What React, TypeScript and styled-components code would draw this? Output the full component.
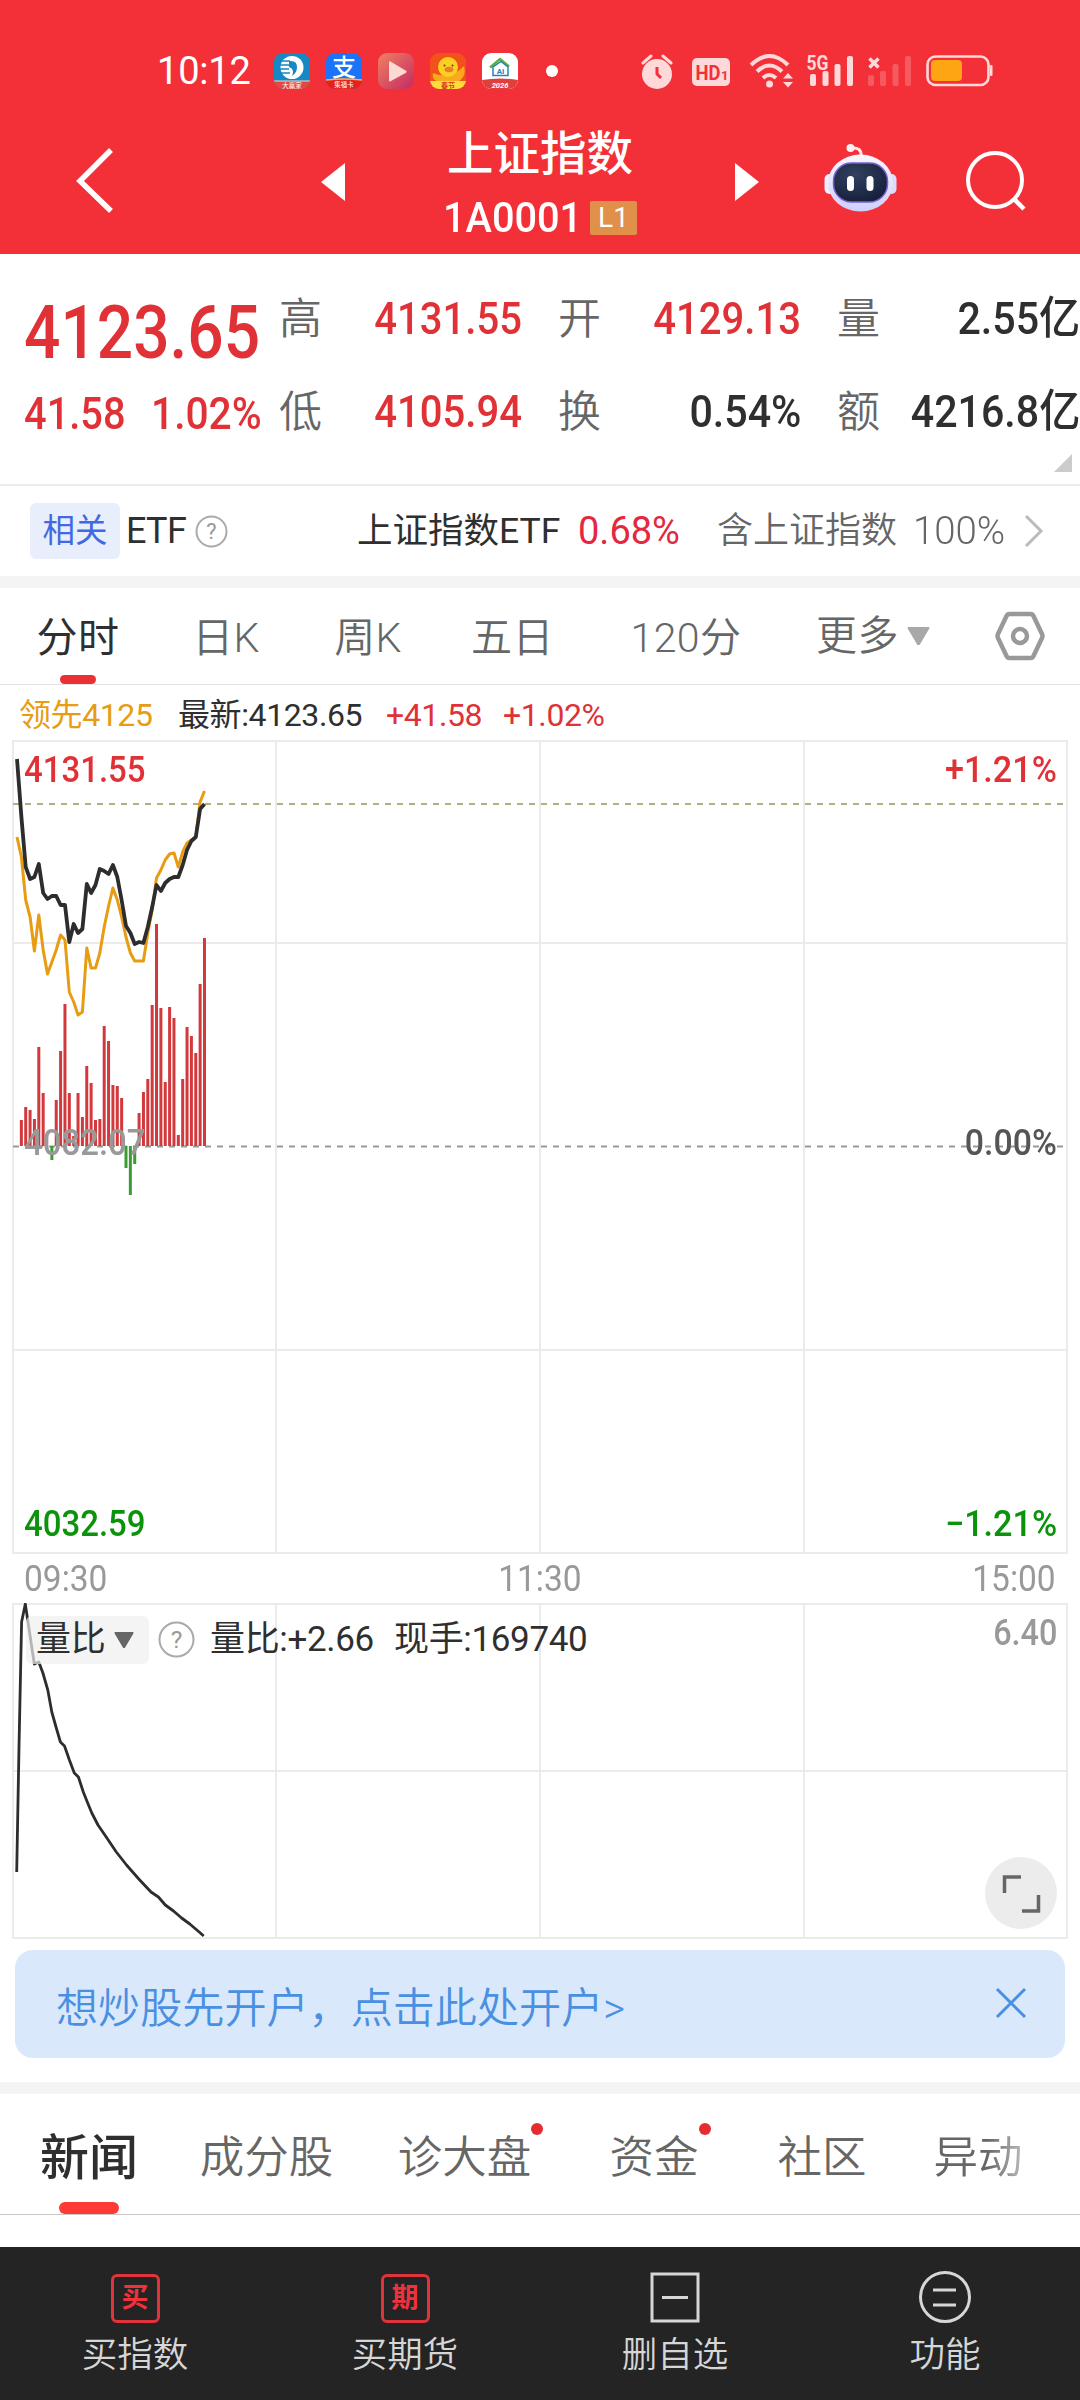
import React from 'react'
import styled, { createGlobalStyle } from 'styled-components';

const RED = '#e03136';
const INK = '#2f2f2f';
const GREY = '#666';

const GlobalStyle = createGlobalStyle`
    * { box-sizing: border-box; }
    body {
        margin: 0;
        background: #fff;
        font-family: Roboto, "Noto Sans CJK SC", sans-serif;
        color: ${INK};
    }
`;

const Screen = styled.div`
    width: 1080px;
    height: 2400px;
    overflow: hidden;
    display: flex;
    flex-direction: column;
    background: #fff;
`;

/* numbers use a narrow cut, squeezed toward the side they are aligned on */
const Num = styled.span<{ $size: number; $color?: string; $weight?: number; $x?: number; $from?: string }>`
    display: inline-block;
    font-size: ${(p) => p.$size}px;
    line-height: 1;
    font-weight: ${(p) => p.$weight || 500};
    color: ${(p) => p.$color || 'inherit'};
    white-space: nowrap;
    transform: scaleX(${(p) => p.$x || 0.9});
    transform-origin: ${(p) => p.$from || 'left'} center;
`;

/* ---------- header ---------- */

const Header = styled.header`
    height: 254px;
    flex: none;
    background: #f33038;
    color: #fff;
`;

const StatusBar = styled.div`
    height: 127px;
    padding: 15px 87px 0 157px;
    display: flex;
    align-items: center;
`;

const Clock = styled.span`
    width: 117px;
    font-size: 38px;
    font-weight: 400;
    letter-spacing: -0.2px;
`;

const AppIcons = styled.div`
    display: flex;
    align-items: center;
    gap: 16px;

    svg { display: block; }
`;

const SystemIcons = styled.div`
    margin-left: auto;
    display: flex;
    align-items: center;

    svg { display: block; }
`;

const NavBar = styled.div`
    height: 127px;
    display: grid;
    grid-template-columns: 310px 110px 240px 120px 120px 180px;
    align-items: center;
    justify-items: center;

    svg { display: block; }
`;

const BackSlot = styled.div`
    width: 100%;
    padding: 0 0 22px 74px;
`;

const ArrowSlot = styled.div<{ $side: 'left' | 'right' }>`
    width: 100%;
    display: flex;
    padding: ${(p) => (p.$side === 'left' ? '0 0 17px 11px' : '0 0 17px 75px')};
`;

const RobotSlot = styled.div`
    padding: 0 0 25px 41px;
`;

const SearchSlot = styled.div`
    padding: 0 0 19px 12px;
`;

const TitleBlock = styled.div`
    height: 127px;
    display: flex;
    flex-direction: column;
    align-items: center;

    h1 {
        margin: 0;
        height: 54px;
        font-size: 46.5px;
        line-height: 54px;
        font-weight: 500;
    }
`;

const CodeLine = styled.div`
    width: 194px;
    margin-top: 14px;
    height: 46px;
    display: flex;
    align-items: center;
    justify-content: space-between;
`;

const CodeText = styled.div`
    width: 132px;
`;

const LevelBadge = styled.span`
    width: 47px;
    height: 34px;
    border-radius: 2px;
    background: #e1904a;
    font-size: 28px;
    line-height: 34px;
    text-align: center;
`;

/* ---------- quote ---------- */

const Quote = styled.section`
    height: 232px;
    flex: none;
    padding: 18px 0 0 24px;
    border-bottom: 2px solid #ebebeb;
    display: grid;
    grid-template-columns: 255px 801px;
    grid-template-rows: 93px 93px 28px;
    align-items: center;
`;

const PriceCell = styled.div`
    padding-top: 29px;
`;

const ChangeCell = styled.div`
    display: grid;
    grid-template-columns: 127px 1fr;
    padding-top: 5px;
`;

const QuoteGrid = styled.div`
    grid-row: 1 / span 2;
    grid-column: 2;
    display: grid;
    grid-template-columns: 279px 279px 240px;
    grid-template-rows: 93px 93px;
    align-items: center;
`;

const QuoteItem = styled.div`
    width: 243px;
    display: flex;
    align-items: center;
    justify-content: space-between;
`;

const Label = styled.div`
    font-size: 43px;
    line-height: 60px;
    font-weight: 350;
    color: ${GREY};
`;

const CornerMark = styled.div`
    grid-row: 3;
    grid-column: 2;
    justify-self: end;
    align-self: end;
    margin: 0 8px 14px 0;
    width: 18px;
    height: 18px;
    background: #ccc;
    clip-path: polygon(100% 0, 100% 100%, 0 100%);
`;

const EtfRow = styled.section`
    height: 90px;
    flex: none;
    display: flex;
    align-items: center;
    font-size: 36px;
    line-height: 56px;
`;

const EtfChip = styled.span`
    width: 90px;
    height: 56px;
    margin-left: 30px;
    border-radius: 6px;
    background: #e8eefc;
    color: #4169e1;
    font-size: 32.5px;
    line-height: 56px;
    text-align: center;
`;

const EtfTag = styled.span`
    width: 75px;
    padding-left: 6px;
    font-size: 36px;
    letter-spacing: -0.7px;
`;

const EtfName = styled.span`
    width: 221px;
    margin-left: 129px;
    font-size: 35.5px;
    white-space: nowrap;
`;

const EtfShare = styled.span`
    width: 196px;
    font-size: 36px;
    font-weight: 350;
    color: ${GREY};
`;

const EtfPct = styled.span<{ $w: number }>`
    width: ${(p) => p.$w}px;
    display: flex;
`;

const Band = styled.div`
    height: 12px;
    flex: none;
    background: #f4f4f4;
`;

/* ---------- period tabs ---------- */

const PeriodTabs = styled.nav`
    height: 97px;
    flex: none;
    border-bottom: 1px solid #e2e2e2;
    display: grid;
    grid-template-columns: 156px 140px 144px 145px 202px 145px 1fr;
`;

const PeriodTab = styled.div<{ $active?: boolean }>`
    height: 96px;
    display: flex;
    flex-direction: column;
    align-items: center;
    padding-top: 20px;
    font-size: 41px;
    line-height: 60px;
    letter-spacing: 0.4px;
    font-weight: ${(p) => (p.$active ? 400 : 350)};
    color: ${(p) => (p.$active ? INK : GREY)};
    white-space: nowrap;

    &::after {
        content: '';
        display: ${(p) => (p.$active ? 'block' : 'none')};
        width: 36px;
        height: 9px;
        margin-top: 7px;
        border-radius: 5px;
        background: #ea3035;
    }
`;

const MoreTab = styled(PeriodTab)`
    flex-direction: row;
    align-items: center;
    justify-content: flex-start;
    padding: 0 0 0 29px;
    gap: 8px;
`;

const HexSlot = styled.div`
    display: flex;
    align-items: center;
    padding: 0 0 1px 63px;
`;

/* ---------- charts ---------- */

const Legend = styled.div`
    height: 55px;
    flex: none;
    padding: 5px 0 0 19px;
    display: grid;
    grid-template-columns: 159px 208px 117px 1fr;
    align-items: center;
    font-size: 32px;
    line-height: 48px;
`;

const LegendItem = styled.span<{ $color?: string }>`
    color: ${(p) => p.$color || INK};
    letter-spacing: -0.4px;
    white-space: nowrap;
`;

const ChartPanel = styled.div<{ $h: number }>`
    position: relative;
    height: ${(p) => p.$h}px;
    flex: none;
    margin: 0 11px 0 12px;

    > svg { display: block; }
`;

const ChartLabel = styled.div<{ $top: number; $side: 'left' | 'right' }>`
    position: absolute;
    top: ${(p) => p.$top}px;
    ${(p) => p.$side}: 12px;
    display: flex;
`;

const TimeAxis = styled.div`
    height: 49px;
    flex: none;
    padding: 0 24px;
    display: flex;
    align-items: center;
    justify-content: space-between;
`;

const IndicatorBar = styled.div`
    position: absolute;
    top: 12px;
    left: 14px;
    display: flex;
    align-items: center;
    font-size: 35px;
    line-height: 48px;
    letter-spacing: -0.35px;
    white-space: nowrap;
`;

const IndicatorPick = styled.span`
    width: 123px;
    height: 48px;
    padding: 1px 0 0 10px;
    margin-right: 9px;
    border-radius: 6px;
    background: rgba(240, 240, 240, 0.7);
    display: flex;
    align-items: center;
    gap: 9px;
`;

const IndicatorValue = styled.span<{ $w: number }>`
    width: ${(p) => p.$w}px;
    padding-top: 1px;
`;

const IndicatorHelp = styled.span`
    display: flex;
    margin-right: 15px;
`;

const ExpandButton = styled.button`
    position: absolute;
    right: 12px;
    bottom: 10px;
    width: 72px;
    height: 72px;
    padding: 0;
    border: none;
    border-radius: 50%;
    background: #ececec;

    svg { display: block; }
`;

/* ---------- banner, news tabs, bottom bar ---------- */

const Banner = styled.div`
    height: 108px;
    flex: none;
    margin: 11px 15px 24px;
    padding: 0 38px 0 41px;
    border-radius: 18px;
    background: #dae8fb;
    color: #4a90e2;
    display: flex;
    align-items: center;
    justify-content: space-between;
    font-size: 42.1px;
    font-weight: 350;

    svg { margin-bottom: 2px; }
`;

const NewsTabs = styled.nav`
    height: 121px;
    flex: none;
    border-bottom: 1px solid #c9c9c9;
    display: flex;
`;

const NewsTab = styled.div<{ $w: number; $active?: boolean; $fade?: boolean }>`
    width: ${(p) => p.$w}px;
    height: 120px;
    padding-top: ${(p) => (p.$active ? 35 : 34)}px;
    display: flex;
    flex-direction: column;
    align-items: center;
    line-height: 60px;
    font-size: ${(p) => (p.$active ? 49 : 44.5)}px;
    font-weight: ${(p) => (p.$active ? 500 : 350)};
    color: ${(p) => (p.$active ? INK : GREY)};

    span {
        position: relative;
        ${(p) => p.$fade && 'mask-image: linear-gradient(90deg, #000 60%, rgba(0, 0, 0, 0.45));'}
    }
`;

const Underline = styled.i`
    width: 60px;
    height: 12px;
    margin-top: 13px;
    border-radius: 6px;
    background: #fe3a34;
`;

const RedDot = styled.i`
    position: absolute;
    top: -5px;
    right: -12px;
    width: 12px;
    height: 12px;
    border-radius: 50%;
    background: #e52d31;
`;

const BottomBar = styled.footer`
    height: 153px;
    flex: none;
    margin-top: 32px;
    background: #242424;
    color: #d6d6d6;
    display: grid;
    grid-template-columns: repeat(4, 270px);
`;

const BottomItem = styled.div`
    padding-top: 24px;
    display: flex;
    flex-direction: column;
    align-items: center;
    font-size: 35.5px;
    line-height: 60px;
    font-weight: 350;
`;

const IconBox = styled.div`
    height: 54px;
    display: flex;
    align-items: center;
`;

const SealIcon = styled.span`
    width: 49px;
    height: 49px;
    border: 3px solid #e0333c;
    border-radius: 6px;
    color: #f2303a;
    font-size: 27px;
    line-height: 42px;
    font-weight: 700;
    text-align: center;
`;

/* ---------- data ---------- */

const STEP = 4.36;

const price = [
    19, 77, 127, 139, 137, 124, 153, 159, 156, 156, 165, 165, 202, 184, 193, 189, 144, 153, 145, 129, 131, 134,
    125, 137, 160, 186, 193, 204, 202, 203, 187, 167, 145, 151, 143, 139, 137, 137, 125, 110, 101, 97, 69, 64,
];

const lead = [
    97, 117, 160, 177, 211, 175, 210, 234, 222, 210, 195, 200, 252, 262, 275, 272, 208, 228, 228, 213, 187, 166,
    148, 160, 177, 197, 213, 221, 221, 221, 193, 170, 138, 130, 120, 114, 113, 127, 112, 103, 100, 97, 62, 51,
];

const volume = [
    0, 26, 39, 36, 27, 99, 53, 0, -14, 46, 95, 142, 53, 10, 53, 29, 80, 63, 26, 27, 120, 105,
    61, 60, 48, -22, -49, -18, 33, 54, 67, 141, 222, 138, 64, 139, 128, 11, 67, 119, 110, 93, 162, 208,
];

const ratio =
    '3.7,269 6,144 8.6,19 12.3,1 21.3,61 25.8,59 29.9,70 34.8,87 38.8,109 43.3,125 47.4,139 51.5,143 56.4,157 ' +
    '61.3,170 65.4,174 70.3,189 74.3,199 78.8,210 85,222 93.9,235 103.3,249 113.5,262 125.8,276 138,289 ' +
    '145.4,294 152.3,302 160.5,308 168.6,315 176.8,321 186.2,329 190.7,333';

const toPoints = (ys: number[]) => ys.map((y, i) => `${(4 + i * STEP).toFixed(1)},${y}`).join(' ');

const quotes = [
    { label: '高', value: '4131.55', up: true },
    { label: '开', value: '4129.13', up: true },
    { label: '量', value: '2.55亿' },
    { label: '低', value: '4105.94', up: true },
    { label: '换', value: '0.54%' },
    { label: '额', value: '4216.8亿' },
];

/* ---------- small drawings ---------- */

function AppIconSet() {
    return (
        <AppIcons>
            <svg width="36" height="36" viewBox="0 0 36 36">
                <clipPath id="r1"><rect width="36" height="36" rx="9" /></clipPath>
                <g clipPath="url(#r1)">
                    <rect width="36" height="36" fill="#1688c4" />
                    <circle cx="18" cy="14.500" r="11.500" fill="#fff" />
                    <path d="M15 8q8-1 8 6q0 6-5 9q3-7-3-9z" fill="#1688c4" />
                    <path d="M5 8h11M4 12h11M4 16h11M6 20h10" stroke="#1688c4" strokeWidth="1.500" />
                    <rect y="28" width="36" height="8" fill="#e5483f" />
                    <path d="M0 28h36" stroke="#f6d7c8" />
                </g>
                <text x="18" y="35" fontSize="6.500" fill="#fff" textAnchor="middle">大赢家</text>
            </svg>
            <svg width="36" height="36" viewBox="0 0 36 36">
                <clipPath id="r2"><rect width="36" height="36" rx="9" /></clipPath>
                <g clipPath="url(#r2)">
                    <rect width="36" height="36" fill="#1a73f8" />
                    <path d="M0 27q18-2 36 0v9H0z" fill="#e8201c" />
                    <path d="M0 27q18-2 36 0" stroke="#ffb347" strokeWidth="1.500" fill="none" />
                </g>
                <text x="18" y="23" fontSize="24" fontWeight="500" fill="#fff" textAnchor="middle">支</text>
                <text x="18" y="34" fontSize="6.500" fill="#fff" textAnchor="middle">集福卡</text>
            </svg>
            <svg width="36" height="36" viewBox="0 0 36 36">
                <defs>
                    <linearGradient id="play" x1="0" y1="0" x2="1" y2="1">
                        <stop offset="0" stopColor="#f27f62" />
                        <stop offset="1" stopColor="#c42a63" />
                    </linearGradient>
                </defs>
                <rect width="36" height="36" rx="9" fill="url(#play)" />
                <path d="M11 9.500v18q0 1.500 1.500.8l15.500-8.500q1.500-1 0-2L12.500 8.500q-1.500-.6-1.500 1z" fill="#fcd9d3" />
            </svg>
            <svg width="36" height="36" viewBox="0 0 36 36">
                <clipPath id="r4"><rect width="36" height="36" rx="9" /></clipPath>
                <g clipPath="url(#r4)">
                    <rect width="36" height="36" fill="#f2521a" />
                    <path d="M3 20q-2 8 8 9h17q9-6 6-16q-8 8-14 8q-8 3-17-1z" fill="#f8a91c" />
                    <circle cx="18" cy="14" r="10" fill="#fbcf24" />
                    <ellipse cx="19" cy="16.500" rx="4.500" ry="2.800" fill="#ef7b2c" />
                    <circle cx="14.500" cy="12.500" r="1" fill="#6b3510" />
                    <circle cx="22.500" cy="12.500" r="1" fill="#6b3510" />
                    <rect y="28" width="36" height="8" fill="#fddb3c" />
                </g>
                <text x="18" y="35" fontSize="7" fontWeight="700" fill="#d43a16" textAnchor="middle">春节</text>
            </svg>
            <svg width="36" height="36" viewBox="0 0 36 36">
                <clipPath id="r5"><rect width="36" height="36" rx="9" /></clipPath>
                <g clipPath="url(#r5)">
                    <rect width="36" height="36" fill="#fff" />
                    <path d="M0 27q18-3 36 0v9H0z" fill="#e0403c" />
                </g>
                <path d="M8 14.500L18 6l9 7.500" stroke="#5cb03c" strokeWidth="2.400" fill="none" />
                <path d="M11 14v8.500h15V14l-7-5.500z" stroke="#2783b8" strokeWidth="1.500" fill="none" />
                <text x="18.500" y="20.500" fontSize="8" fontWeight="700" fill="#2783b8" textAnchor="middle">AI</text>
                <text x="18" y="34.500" fontSize="7.500" fontWeight="700" fontStyle="italic" fill="#fff" textAnchor="middle">2026</text>
            </svg>
            <svg width="36" height="12" viewBox="0 0 36 12">
                <circle cx="18" cy="6" r="6" fill="#fff" />
            </svg>
        </AppIcons>
    );
}

function SystemIconSet() {
    return (
        <SystemIcons>
            <svg width="352" height="40" viewBox="641 51 352 40">
                <g fill="#ffd9da">
                    <circle cx="657" cy="74" r="15" />
                    <path d="M643 63l8-7M671 63l-8-7" stroke="#ffd9da" strokeWidth="3" strokeLinecap="round" />
                    <path d="M657 67v7l4 4" stroke="#f33038" strokeWidth="3" fill="none" />
                    <rect x="692" y="58" width="38" height="28" rx="5" />
                    <circle cx="769.500" cy="84" r="3.500" />
                    <path d="M788 73l5 5.500h-10zM788 87.500l5-5.500h-10z" />
                    <rect x="810" y="74" width="6" height="12" rx="2" />
                    <rect x="822.500" y="71" width="6" height="15" rx="2" />
                    <rect x="834.500" y="64" width="6" height="22" rx="2" />
                    <rect x="847" y="56" width="6" height="30" rx="2" />
                    <rect x="990" y="65" width="2.500" height="11" rx="1" />
                </g>
                <g fill="none" stroke="#ffd9da" strokeWidth="4">
                    <path d="M751 65q18.500-18 37 0" />
                    <path d="M757 71.500q12.500-12 25 0" />
                    <path d="M763 78q6.500-6 13 0" />
                </g>
                <g fill="#fff" opacity="0.2">
                    <rect x="868" y="75" width="6" height="11" rx="2" />
                    <rect x="880" y="71" width="6" height="15" rx="2" />
                    <rect x="892.500" y="64" width="6" height="22" rx="2" />
                    <rect x="905" y="56" width="6" height="30" rx="2" />
                </g>
                <path d="M869.500 58.500l9 9M878.500 58.500l-9 9" stroke="#ffd9da" strokeWidth="3.500" />
                <rect x="927.500" y="56.500" width="61" height="28.500" rx="8" fill="none" stroke="#ffd9da" strokeWidth="2.600" />
                <rect x="931" y="60" width="31" height="21" rx="4" fill="#fda513" />
                <text x="695.500" y="79.500" fontSize="21" fontWeight="700" fill="#f33038" textLength="25" lengthAdjust="spacingAndGlyphs">HD</text>
                <text x="721" y="79.500" fontSize="13" fontWeight="700" fill="#f33038">1</text>
                <text x="806.500" y="69.500" fontSize="20" fontWeight="700" fill="#ffd9da" textLength="22" lengthAdjust="spacingAndGlyphs">5G</text>
            </svg>
        </SystemIcons>
    );
}

function Robot() {
    return (
        <svg width="73" height="70" viewBox="0 0 73 70">
            <defs>
                <linearGradient id="shell" x1="0" y1="0" x2="0" y2="1">
                    <stop offset="0" stopColor="#fbf7fd" />
                    <stop offset="1" stopColor="#ccd0fb" />
                </linearGradient>
                <radialGradient id="face" cx="0.4" cy="0.3" r="0.8">
                    <stop offset="0" stopColor="#33425f" />
                    <stop offset="1" stopColor="#131c38" />
                </radialGradient>
            </defs>
            <path d="M27 5q11-1 10 8" stroke="#fbe4ec" strokeWidth="3" fill="none" />
            <circle cx="26.500" cy="5" r="4" fill="#fdeef2" />
            <rect x="0.500" y="31" width="10" height="20" rx="5" fill="#f1eefc" />
            <rect x="62.500" y="31" width="10" height="20" rx="5" fill="#dcdcfb" />
            <ellipse cx="36.500" cy="40" rx="32.500" ry="28.500" fill="url(#shell)" />
            <rect x="9.500" y="20" width="54" height="39" rx="18" fill="url(#face)" stroke="#7a5fd0" strokeWidth="1.500" />
            <rect x="23" y="33" width="7" height="15" rx="3.500" fill="#fff" />
            <rect x="42.500" y="33" width="7" height="15" rx="3.500" fill="#fff" />
        </svg>
    );
}

function QuestionMark({ r }: { r: number }) {
    const box = r * 2 + 3;
    return (
        <svg width={box} height={box} viewBox={`0 0 ${box} ${box}`}>
            <circle cx={box / 2} cy={box / 2} r={r} fill="none" stroke="#aaa" strokeWidth="2" />
            <text x={box / 2} y={box / 2 + r * 0.52} fontSize={r * 1.45} fill="#999" textAnchor="middle">?</text>
        </svg>
    );
}

function DownArrow({ w, color }: { w: number; color: string }) {
    return (
        <svg width={w} height={w * 0.82} viewBox="0 0 22 18">
            <path d="M1.500 1h19L11 17z" fill={color} stroke={color} strokeWidth="2" strokeLinejoin="round" />
        </svg>
    );
}

function PriceChart() {
    return (
        <svg width="1057" height="814" viewBox="-1 0 1057 814">
            <g stroke="#ebebeb" strokeWidth="2" fill="none">
                <rect x="0" y="1" width="1054" height="812" />
                <path d="M263 1v812M527 1v812M791 1v812M0 203h1054M0 610h1054" />
            </g>
            <path d="M0 64h1050" stroke="#b5ad84" strokeWidth="2" strokeDasharray="6 6" />
            <path d="M0 406.500h1050" stroke="#999" strokeWidth="2" strokeDasharray="6 6" />
            {volume.map((v, i) => (
                <rect
                    key={i}
                    x={2.500 + i * STEP}
                    y={v > 0 ? 406 - v : 406}
                    width="3"
                    height={Math.abs(v)}
                    fill={v > 0 ? '#d2393c' : '#3d9b35'}
                />
            ))}
            <polyline points={toPoints(lead)} fill="none" stroke="#e79c13" strokeWidth="3" strokeLinejoin="round" />
            <polyline points={toPoints(price)} fill="none" stroke="#2d2d2d" strokeWidth="3.800" strokeLinejoin="round" />
        </svg>
    );
}

function RatioChart() {
    return (
        <svg width="1057" height="336" viewBox="-1 0 1057 336">
            <g stroke="#ebebeb" strokeWidth="2" fill="none">
                <rect x="0" y="1" width="1054" height="334" />
                <path d="M263 1v334M527 1v334M791 1v334M0 168h1054" />
            </g>
            <polyline points={ratio} fill="none" stroke="#2d2d2d" strokeWidth="2.800" strokeLinejoin="round" />
        </svg>
    );
}

/* ---------- page ---------- */

function App() {
    return (
        <Screen>
            <GlobalStyle />
            <Header>
                <StatusBar>
                    <Clock>10:12</Clock>
                    <AppIconSet />
                    <SystemIconSet />
                </StatusBar>
                <NavBar>
                    <BackSlot>
                        <svg width="42" height="66" viewBox="0 0 42 66">
                            <path d="M37 3L6 34l31 30" stroke="#fff" strokeWidth="5.500" fill="none" />
                        </svg>
                    </BackSlot>
                    <ArrowSlot $side="left">
                        <svg width="24" height="38"><path d="M24 0v38L0 19z" fill="#fff" /></svg>
                    </ArrowSlot>
                    <TitleBlock>
                        <h1>上证指数</h1>
                        <CodeLine>
                            <CodeText><Num $size={42} $x={0.945}>1A0001</Num></CodeText>
                            <LevelBadge>L1</LevelBadge>
                        </CodeLine>
                    </TitleBlock>
                    <ArrowSlot $side="right">
                        <svg width="24" height="38"><path d="M0 0v38L24 19z" fill="#fff" /></svg>
                    </ArrowSlot>
                    <RobotSlot><Robot /></RobotSlot>
                    <SearchSlot>
                        <svg width="62" height="62" viewBox="0 0 62 62">
                            <circle cx="30" cy="30" r="27" stroke="#fff" strokeWidth="4" fill="none" />
                            <path d="M49 49l10 10" stroke="#fff" strokeWidth="4.500" />
                        </svg>
                    </SearchSlot>
                </NavBar>
            </Header>

            <Quote>
                <PriceCell>
                    <Num $size={74} $color={RED} $x={0.865}>4123.65</Num>
                </PriceCell>
                <QuoteGrid>
                    {quotes.map((q) => (
                        <QuoteItem key={q.label}>
                            <Label>{q.label}</Label>
                            <Num $size={45} $from="right" $x={q.up ? 0.89 : 0.915} $color={q.up ? RED : INK}>{q.value}</Num>
                        </QuoteItem>
                    ))}
                </QuoteGrid>
                <ChangeCell>
                    <Num $size={44} $color={RED} $x={0.905}>41.58</Num>
                    <Num $size={44} $color={RED} $x={0.925}>1.02%</Num>
                </ChangeCell>
                <CornerMark />
            </Quote>

            <EtfRow>
                <EtfChip>相关</EtfChip>
                <EtfTag>ETF</EtfTag>
                <QuestionMark r={15} />
                <EtfName>上证指数ETF</EtfName>
                <EtfPct $w={139}><Num $size={38} $weight={400} $color="#e5273f" $x={1}>0.68%</Num></EtfPct>
                <EtfShare>含上证指数</EtfShare>
                <EtfPct $w={110}><Num $size={38} $weight={350} $color={GREY} $x={1.01}>100%</Num></EtfPct>
                <svg width="22" height="36" viewBox="0 0 22 36">
                    <path d="M3 3l15 15L3 33" stroke="#bbb" strokeWidth="3" fill="none" />
                </svg>
            </EtfRow>
            <Band />

            <PeriodTabs>
                <PeriodTab $active>分时</PeriodTab>
                <PeriodTab>日K</PeriodTab>
                <PeriodTab>周K</PeriodTab>
                <PeriodTab>五日</PeriodTab>
                <PeriodTab>120分</PeriodTab>
                <MoreTab>更多<DownArrow w={23} color="#a8a8a8" /></MoreTab>
                <HexSlot>
                    <svg width="50" height="50" viewBox="0 0 50 50" fill="none" stroke="#999" strokeWidth="4.500">
                        <path d="M14.500 3h21q2 0 3 2L47 23q1 2 0 4L38.500 45q-1 2-3 2h-21q-2 0-3-2L3 27q-1-2 0-4L11.500 5q1-2 3-2z" />
                        <circle cx="25" cy="25" r="7" />
                    </svg>
                </HexSlot>
            </PeriodTabs>

            <Legend>
                <LegendItem $color="#e79c13">领先4125</LegendItem>
                <LegendItem>最新:4123.65</LegendItem>
                <LegendItem $color={RED}>+41.58</LegendItem>
                <LegendItem $color={RED}>+1.02%</LegendItem>
            </Legend>

            <ChartPanel $h={814}>
                <PriceChart />
                <ChartLabel $top={12} $side="left"><Num $size={36} $color={RED} $x={0.915}>4131.55</Num></ChartLabel>
                <ChartLabel $top={12} $side="right"><Num $size={36} $color={RED} $x={0.95} $from="right">+1.21%</Num></ChartLabel>
                <ChartLabel $top={385} $side="left"><Num $size={36} $color="#999" $x={0.915}>4082.07</Num></ChartLabel>
                <ChartLabel $top={385} $side="right"><Num $size={36} $color="#555" $x={0.94} $from="right">0.00%</Num></ChartLabel>
                <ChartLabel $top={766} $side="left"><Num $size={36} $color="#0c930c" $x={0.915}>4032.59</Num></ChartLabel>
                <ChartLabel $top={766} $side="right"><Num $size={36} $color="#0c930c" $x={0.95} $from="right">−1.21%</Num></ChartLabel>
            </ChartPanel>

            <TimeAxis>
                <Num $size={36} $weight={450} $color="#999" $x={0.93}>09:30</Num>
                <Num $size={36} $weight={450} $color="#999" $x={0.93} $from="center">11:30</Num>
                <Num $size={36} $weight={450} $color="#999" $x={0.93} $from="right">15:00</Num>
            </TimeAxis>

            <ChartPanel $h={336}>
                <RatioChart />
                <IndicatorBar>
                    <IndicatorPick>量比<DownArrow w={20} color="#666" /></IndicatorPick>
                    <IndicatorHelp><QuestionMark r={17} /></IndicatorHelp>
                    <IndicatorValue $w={184}>量比:+2.66</IndicatorValue>
                    <IndicatorValue $w={200}>现手:169740</IndicatorValue>
                </IndicatorBar>
                <ChartLabel $top={12} $side="right"><Num $size={36} $color="#999" $from="right">6.40</Num></ChartLabel>
                <ExpandButton>
                    <svg width="72" height="72" fill="none" stroke="#666" strokeWidth="3.500">
                        <path d="M19.500 36V20H36M53.500 38v16H37" />
                    </svg>
                </ExpandButton>
            </ChartPanel>

            <Banner>
                想炒股先开户，点击此处开户&gt;
                <svg width="32" height="32"><path d="M2 2l28 28M30 2L2 30" stroke="#4a90e2" strokeWidth="3" /></svg>
            </Banner>
            <Band />

            <NewsTabs>
                <NewsTab $w={178} $active>新闻<Underline /></NewsTab>
                <NewsTab $w={177}>成分股</NewsTab>
                <NewsTab $w={219}><span>诊大盘<RedDot /></span></NewsTab>
                <NewsTab $w={160}><span>资金<RedDot /></span></NewsTab>
                <NewsTab $w={176}>社区</NewsTab>
                <NewsTab $w={136} $fade><span>异动</span></NewsTab>
            </NewsTabs>

            <BottomBar>
                <BottomItem><IconBox><SealIcon>买</SealIcon></IconBox>买指数</BottomItem>
                <BottomItem><IconBox><SealIcon>期</SealIcon></IconBox>买期货</BottomItem>
                <BottomItem>
                    <IconBox>
                        <svg width="50" height="52" stroke="#d6d6d6" strokeWidth="3" fill="none">
                            <path d="M2 2h46v47H2zM12 25.500h26" />
                        </svg>
                    </IconBox>
                    删自选
                </BottomItem>
                <BottomItem>
                    <IconBox>
                        <svg width="54" height="54" stroke="#d6d6d6" strokeWidth="3" fill="none">
                            <circle cx="27" cy="26" r="24.500" />
                            <path d="M15 19h23M15 34h23" />
                        </svg>
                    </IconBox>
                    功能
                </BottomItem>
            </BottomBar>
        </Screen>
    );
}

export default App
